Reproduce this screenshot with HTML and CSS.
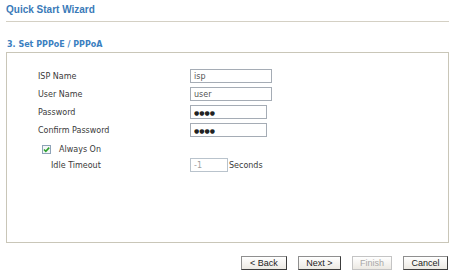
FILE: index.html
```html
<!DOCTYPE html>
<html lang="en">
<head>
  <meta charset="UTF-8">
  <title>Quick Start Wizard</title>
  <link rel="stylesheet" href="styles.css">
</head>
<body>

<div class="wizard">
  <div class="page-title">Quick Start Wizard</div>
  <div class="step-title">3. Set PPPoE / PPPoA</div>

  <div class="step-box">
    <div class="form">
      <label class="field-label">ISP Name</label>
      <input class="text wide" type="text" value="isp">

      <label class="field-label">User Name</label>
      <input class="text wide" type="text" value="user">

      <label class="field-label">Password</label>
      <input class="text pass" type="text" value="&#9679;&#9679;&#9679;&#9679;">

      <label class="field-label">Confirm Password</label>
      <input class="text pass" type="text" value="&#9679;&#9679;&#9679;&#9679;">
    </div>

    <div class="always-on">
      <span class="check">
        <svg width="9" height="9" viewBox="0 0 9 9"><path d="M2 4.5 L3.8 6.3 L7.2 2.6" fill="none" stroke="#2ea12e" stroke-width="1.6"/></svg>
      </span>
      <span>Always On</span>
    </div>

    <div class="idle-row">
      <span class="idle-label">Idle Timeout</span>
      <input class="text timeout" type="text" value="-1" disabled>
      <span class="unit">Seconds</span>
    </div>
  </div>

  <div class="actions">
    <button class="btn back">&lt; Back</button>
    <button class="btn next">Next &gt;</button>
    <button class="btn finish" disabled>Finish</button>
    <button class="btn cancel">Cancel</button>
  </div>
</div>

</body>
</html>
```

FILE: styles.css
```css
body {
  margin: 0;
  background: #ffffff;
  font-family: "DejaVu Sans", Verdana, sans-serif;
  font-size: 8px;
  color: #3a3a3a;
}
.wizard {
  width: 443px;
  margin-left: 6px;
}
.page-title {
  height: 22px;
  padding-top: 4px;
  box-sizing: border-box;
  border-bottom: 1px solid #d4d0c4;
  font-family: "Liberation Sans", Arial, sans-serif;
  font-weight: bold;
  font-size: 10px;
  color: #3a7ab8;
}
.step-title {
  height: 30px;
  padding-top: 18px;
  padding-left: 1px;
  box-sizing: border-box;
  font-weight: bold;
  font-size: 8px;
  color: #3b80c0;
}
.step-box {
  height: 191px;
  box-sizing: border-box;
  border: 1px solid #c9c6b8;
  padding: 16px 0 0 31px;
}
.form {
  display: grid;
  grid-template-columns: 152px auto;
  grid-auto-rows: 18px;
  align-items: start;
}
.field-label {
  line-height: 15px;
}
.text {
  height: 14px;
  box-sizing: border-box;
  border: 1px solid #a5acb5;
  padding: 0 3px;
  font-family: "DejaVu Sans", Verdana, sans-serif;
  font-size: 8px;
  color: #555555;
  background: #ffffff;
}
.wide {
  width: 82px;
}
.pass {
  width: 77px;
  font-size: 6px;
  letter-spacing: 0;
  color: #222222;
}
.always-on {
  display: flex;
  align-items: center;
  gap: 8px;
  margin: 1px 0 0 4px;
  height: 14px;
}
.check {
  width: 9px;
  height: 9px;
  box-sizing: border-box;
  border: 1px solid #8ea3b8;
  background: #f4f6f8;
  display: flex;
}
.check svg {
  margin: -1px;
}
.idle-row {
  display: flex;
  align-items: center;
  margin-top: 2px;
  padding-left: 13px;
  height: 14px;
}
.idle-label {
  width: 139px;
}
.timeout {
  width: 38px;
  border-color: #b9c3cc;
  color: #a0a0a0;
}
.unit {
  margin-left: 1px;
}
.actions {
  display: flex;
  justify-content: flex-end;
  gap: 11px;
  margin-top: 13px;
  padding-right: 1px;
}
.btn {
  height: 14px;
  padding: 0;
  box-sizing: border-box;
  border: 1px solid #3f3f3f;
  border-color: #8f8f8f #3c3c3c #3c3c3c #8f8f8f;
  background: linear-gradient(#ffffff, #ece9e3);
  font-family: "Liberation Sans", Arial, sans-serif;
  font-size: 9px;
  color: #222222;
}
.back {
  width: 46px;
}
.next {
  width: 43px;
}
.finish {
  width: 40px;
  color: #a8a8a8;
  border-color: #c4c4c4;
}
.cancel {
  width: 45px;
}
```
